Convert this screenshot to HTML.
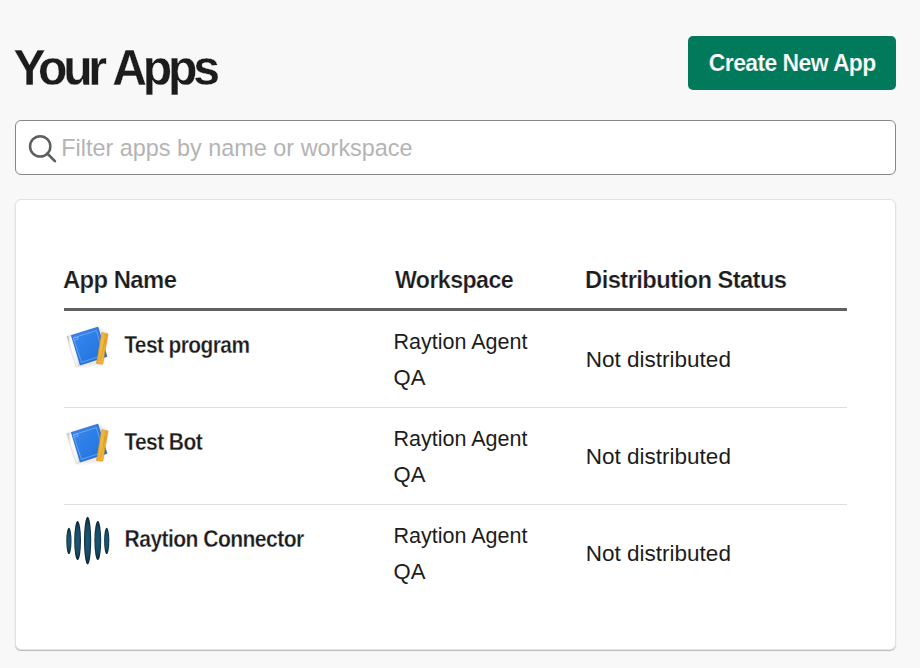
<!DOCTYPE html>
<html><head><meta charset="utf-8">
<style>
*{margin:0;padding:0;box-sizing:border-box}
html,body{width:920px;height:668px;overflow:hidden;background:#f8f8f8;font-family:"Liberation Sans",sans-serif;color:#1d1c1d;position:relative}
.a,.i{position:absolute}
.t{position:absolute;left:0;top:0;white-space:nowrap;line-height:normal;transform-origin:0 0}
#btn{left:688px;top:36px;width:208px;height:54px;background:#007a5a;border-radius:5px}
#input{left:15px;top:120px;width:881px;height:55px;background:#fff;border:1px solid #868686;border-radius:6px}
#card{left:15px;top:199px;width:881px;height:451px;background:#fff;border:1px solid #e2e2e2;border-radius:6px;box-shadow:0 1px 1px rgba(0,0,0,.25)}
#hl{left:64px;top:308px;width:783px;height:3px;background:#616061}
.dv{left:64px;width:783px;height:1px;background:#dddddd}
</style></head><body>
<div class="a" id="btn"></div>
<div class="a" id="input"></div>
<div class="a" id="card"></div>
<div class="t" style="font-weight:bold;font-size:52px;letter-spacing:-4.5px;word-spacing:2px;color:#1d1c1d;-webkit-text-stroke:0.3px #f8f8f8;transform:translate(13.57px,38.15px) scale(0.925,0.975)">Your Apps</div>
<div class="t" style="font-weight:bold;font-size:24px;letter-spacing:-0.6px;word-spacing:0px;color:#ffffff;-webkit-text-stroke:0.2px #007a5a;transform:translate(708.85px,48.87px) scale(0.9549,1.0059)">Create New App</div>
<svg class="i" style="left:26px;top:133px" width="34" height="34" viewBox="0 0 34 34">
<circle cx="14.2" cy="13.4" r="10.15" fill="none" stroke="#5e5e5e" stroke-width="2.5"/>
<line x1="21.3" y1="20.5" x2="28.9" y2="28.2" stroke="#5e5e5e" stroke-width="2.6" stroke-linecap="round"/>
</svg>
<div class="t" style="font-weight:normal;font-size:22px;letter-spacing:0px;word-spacing:0px;color:#b4b4b4;transform:translate(61.17px,133.40px) scale(1.0645,1.12)">Filter apps by name or workspace</div>
<div class="t" style="font-weight:bold;font-size:25px;letter-spacing:-0.6px;word-spacing:0px;color:#1d1c1d;-webkit-text-stroke:0.25px #fff;transform:translate(62.95px,265.44px) scale(0.9542,0.9722)">App Name</div>
<div class="t" style="font-weight:bold;font-size:25px;letter-spacing:-0.6px;word-spacing:0px;color:#1d1c1d;-webkit-text-stroke:0.25px #fff;transform:translate(394.9px,265.44px) scale(0.9268,0.9722)">Workspace</div>
<div class="t" style="font-weight:bold;font-size:25px;letter-spacing:-0.6px;word-spacing:0px;color:#1d1c1d;-webkit-text-stroke:0.25px #fff;transform:translate(585.1px,265.44px) scale(0.949,0.9722)">Distribution Status</div>
<div class="a" id="hl"></div>
<div class="a dv" style="top:407px"></div>
<div class="a dv" style="top:504px"></div>
<svg class="i" style="left:62px;top:322px" width="50" height="50" viewBox="0 0 50 50">
<defs>
<linearGradient id="bl1" x1="0" y1="0" x2="1" y2="1"><stop offset="0" stop-color="#3a8af0"/><stop offset="1" stop-color="#1f6fdc"/></linearGradient>
<linearGradient id="sp1" x1="0" y1="0" x2="1" y2="0"><stop offset="0" stop-color="#b8b8b8"/><stop offset="0.3" stop-color="#ffffff"/><stop offset="0.7" stop-color="#f4f4f4"/><stop offset="1" stop-color="#d0d0d0"/></linearGradient>
<linearGradient id="ru1" x1="0" y1="0" x2="1" y2="0"><stop offset="0" stop-color="#e9a42a"/><stop offset="0.5" stop-color="#f3bb40"/><stop offset="1" stop-color="#e19a22"/></linearGradient>
<filter id="sh1" x="-20%" y="-20%" width="140%" height="140%"><feGaussianBlur stdDeviation="1.2"/></filter>
</defs>
<polygon points="4.2,14.6 36.4,4.5 46.5,12 41.2,43 14,45.6" fill="#000" opacity="0.08" filter="url(#sh1)"/>
<polygon points="4.9,14.6 9.6,13.4 18.5,43 14.2,44.9" fill="url(#sp1)" stroke="#c4c4c4" stroke-width="0.4"/>
<polygon points="9.4,13.5 35.9,5.2 44.9,34.4 18.3,43" fill="url(#bl1)" stroke="#1c5cc8" stroke-width="0.7"/>
<polygon points="11.2,16 34.3,8.6 41.8,33 19.5,40.4" fill="none" stroke="#a8cdf8" stroke-width="0.5" opacity="0.9"/>
<polyline points="11.3,16.3 15.5,14.9 16.2,17 11.9,18.4" fill="none" stroke="#a8cdf8" stroke-width="0.5"/>
<polygon points="39.7,10.5 46,12 40.8,42.3 34.4,41.5" fill="url(#ru1)" stroke="#d18c18" stroke-width="0.5"/>
<line x1="43.2" y1="17" x2="38.6" y2="39" stroke="#8a5a10" stroke-width="0.4" opacity="0.6"/>
</svg>
<svg class="i" style="left:62px;top:419px" width="50" height="50" viewBox="0 0 50 50">
<defs>
<linearGradient id="bl2" x1="0" y1="0" x2="1" y2="1"><stop offset="0" stop-color="#3a8af0"/><stop offset="1" stop-color="#1f6fdc"/></linearGradient>
<linearGradient id="sp2" x1="0" y1="0" x2="1" y2="0"><stop offset="0" stop-color="#b8b8b8"/><stop offset="0.3" stop-color="#ffffff"/><stop offset="0.7" stop-color="#f4f4f4"/><stop offset="1" stop-color="#d0d0d0"/></linearGradient>
<linearGradient id="ru2" x1="0" y1="0" x2="1" y2="0"><stop offset="0" stop-color="#e9a42a"/><stop offset="0.5" stop-color="#f3bb40"/><stop offset="1" stop-color="#e19a22"/></linearGradient>
<filter id="sh2" x="-20%" y="-20%" width="140%" height="140%"><feGaussianBlur stdDeviation="1.2"/></filter>
</defs>
<polygon points="4.2,14.6 36.4,4.5 46.5,12 41.2,43 14,45.6" fill="#000" opacity="0.08" filter="url(#sh2)"/>
<polygon points="4.9,14.6 9.6,13.4 18.5,43 14.2,44.9" fill="url(#sp2)" stroke="#c4c4c4" stroke-width="0.4"/>
<polygon points="9.4,13.5 35.9,5.2 44.9,34.4 18.3,43" fill="url(#bl2)" stroke="#1c5cc8" stroke-width="0.7"/>
<polygon points="11.2,16 34.3,8.6 41.8,33 19.5,40.4" fill="none" stroke="#a8cdf8" stroke-width="0.5" opacity="0.9"/>
<polyline points="11.3,16.3 15.5,14.9 16.2,17 11.9,18.4" fill="none" stroke="#a8cdf8" stroke-width="0.5"/>
<polygon points="39.7,10.5 46,12 40.8,42.3 34.4,41.5" fill="url(#ru2)" stroke="#d18c18" stroke-width="0.5"/>
<line x1="43.2" y1="17" x2="38.6" y2="39" stroke="#8a5a10" stroke-width="0.4" opacity="0.6"/>
</svg>
<svg class="i" style="left:62px;top:512px" width="50" height="58" viewBox="0 0 50 58">
<defs><radialGradient id="rg" cx="0.5" cy="0.5" r="0.5"><stop offset="0" stop-color="#1b5a78"/><stop offset="0.65" stop-color="#164a65"/><stop offset="1" stop-color="#0a2332"/></radialGradient></defs>
<ellipse cx="6.9" cy="28.9" rx="2.6" ry="13.2" fill="url(#rg)"/>
<ellipse cx="15.6" cy="28.6" rx="3.4" ry="19.5" fill="url(#rg)"/>
<ellipse cx="25.6" cy="28.7" rx="3.6" ry="23.9" fill="url(#rg)"/>
<ellipse cx="35.8" cy="28.6" rx="3.4" ry="19.5" fill="url(#rg)"/>
<ellipse cx="44.7" cy="28.9" rx="2.6" ry="13.2" fill="url(#rg)"/>
</svg>
<div class="t" style="font-weight:bold;font-size:22px;letter-spacing:-0.6px;word-spacing:0px;color:#1d1c1d;-webkit-text-stroke:0.25px #fff;transform:translate(124.2px,331.60px) scale(0.9504,1.06)">Test program</div>
<div class="t" style="font-weight:bold;font-size:22px;letter-spacing:-0.6px;word-spacing:0px;color:#1d1c1d;-webkit-text-stroke:0.25px #fff;transform:translate(124.3px,428.60px) scale(0.9537,1.06)">Test Bot</div>
<div class="t" style="font-weight:bold;font-size:22px;letter-spacing:-0.6px;word-spacing:0px;color:#1d1c1d;-webkit-text-stroke:0.25px #fff;transform:translate(124.54px,525.60px) scale(0.9597,1.06)">Raytion Connector</div>
<div class="t" style="font-weight:normal;font-size:21.5px;letter-spacing:0px;word-spacing:0px;color:#1d1c1d;transform:translate(393.4px,328.79px) scale(1.0015,1.0533)">Raytion Agent</div>
<div class="t" style="font-weight:normal;font-size:21.5px;letter-spacing:0px;word-spacing:0px;color:#1d1c1d;transform:translate(393.47px,364.86px) scale(1.0267,1.0493)">QA</div>
<div class="t" style="font-weight:normal;font-size:21.5px;letter-spacing:0px;word-spacing:0px;color:#1d1c1d;transform:translate(585.71px,346.79px) scale(1.0474,1.0533)">Not distributed</div>
<div class="t" style="font-weight:normal;font-size:21.5px;letter-spacing:0px;word-spacing:0px;color:#1d1c1d;transform:translate(393.4px,425.79px) scale(1.0015,1.0533)">Raytion Agent</div>
<div class="t" style="font-weight:normal;font-size:21.5px;letter-spacing:0px;word-spacing:0px;color:#1d1c1d;transform:translate(393.47px,461.86px) scale(1.0267,1.0493)">QA</div>
<div class="t" style="font-weight:normal;font-size:21.5px;letter-spacing:0px;word-spacing:0px;color:#1d1c1d;transform:translate(585.71px,443.79px) scale(1.0474,1.0533)">Not distributed</div>
<div class="t" style="font-weight:normal;font-size:21.5px;letter-spacing:0px;word-spacing:0px;color:#1d1c1d;transform:translate(393.4px,522.79px) scale(1.0015,1.0533)">Raytion Agent</div>
<div class="t" style="font-weight:normal;font-size:21.5px;letter-spacing:0px;word-spacing:0px;color:#1d1c1d;transform:translate(393.47px,558.86px) scale(1.0267,1.0493)">QA</div>
<div class="t" style="font-weight:normal;font-size:21.5px;letter-spacing:0px;word-spacing:0px;color:#1d1c1d;transform:translate(585.71px,540.79px) scale(1.0474,1.0533)">Not distributed</div>
</body></html>
